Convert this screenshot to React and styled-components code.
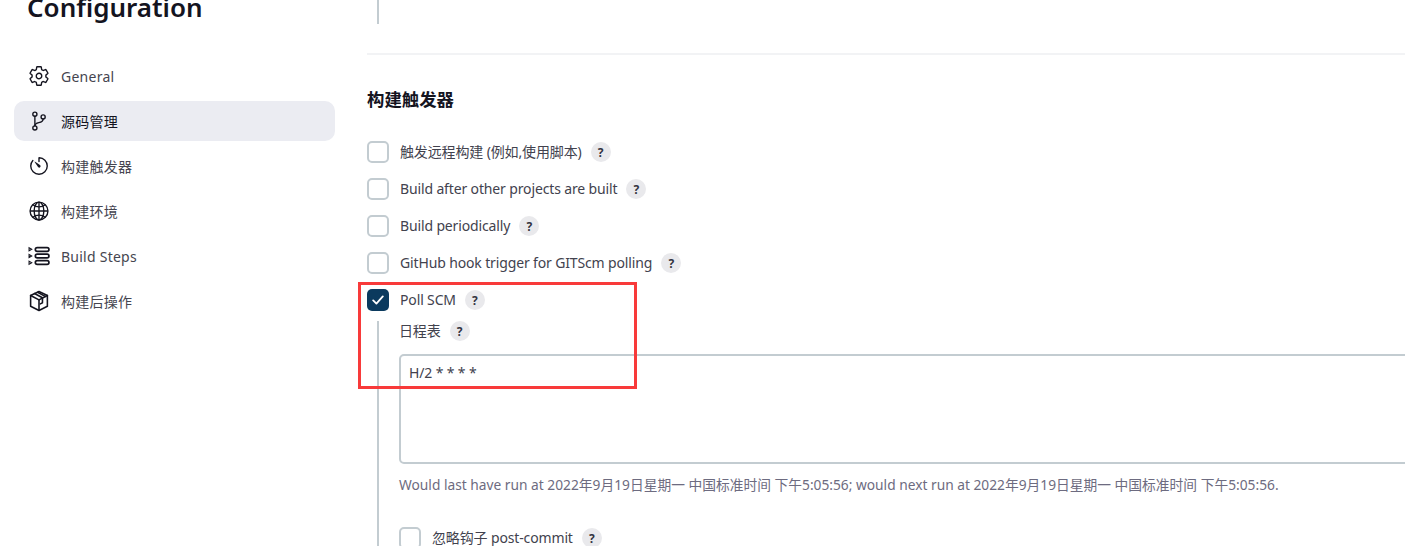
import React from "react";
import styled, { createGlobalStyle } from "styled-components";
import { IoSettingsOutline, IoGitBranchOutline, IoTimerOutline, IoGlobeOutline } from "react-icons/io5";

const GlobalStyle = createGlobalStyle`
  html, body { margin: 0; padding: 0; background: #fff; height: 546px; overflow: hidden; }
  body { font-family: "Noto Sans", "Noto Sans CJK SC", sans-serif; color: #14141f; }
  * { box-sizing: border-box; }
`;

const Page = styled.div`
  display: flex;
  position: relative;
  width: 1405px;
  height: 546px;
  overflow: hidden;
`;

const Sidebar = styled.aside`
  width: 367px;
  flex-shrink: 0;
  padding: 0 32px 0 14px;
`;

const Title = styled.h1`
  margin: -11px 0 31px 13px;
  height: 36px;
  font-size: 26px;
  line-height: 36px;
  font-weight: 600;
  color: #14141f;
`;

const NavList = styled.nav`
  display: flex;
  flex-direction: column;
  gap: 5px;
`;

const NavItem = styled.div`
  display: flex;
  align-items: center;
  gap: 11px;
  height: 40px;
  padding-left: 14px;
  border-radius: 10px;
  font-size: 14px;
  letter-spacing: 0.25px;
  color: ${(p) => (p.$active ? "#14141f" : "#45454f")};
  background: ${(p) => (p.$active ? "#ebecf2" : "transparent")};
  svg { width: 22px; height: 22px; flex-shrink: 0; color: #14141f; }
`;

const Main = styled.main`
  flex: 1;
  min-width: 0;
`;

const TopRule = styled.div`
  width: 2px;
  height: 24px;
  margin-left: 10px;
  background: #c3ccd1;
`;

const Divider = styled.hr`
  margin: 29px 0 0;
  border: 0;
  height: 2px;
  background: #f2f3f5;
`;

const SectionTitle = styled.h2`
  margin: 32px 0 30px;
  font-size: 17.4px;
  line-height: 24px;
  font-weight: 600;
  color: #14141f;
`;

const Rows = styled.div`
  display: flex;
  flex-direction: column;
  gap: 15px;
`;

const Row = styled.div`
  display: flex;
  align-items: center;
  height: 22px;
`;

const Box = styled.span`
  display: flex;
  align-items: center;
  justify-content: center;
  width: 22px;
  height: 22px;
  flex-shrink: 0;
  border-radius: 5px;
  border: ${(p) => (p.$checked ? "0" : "2px solid #c3ccd1")};
  background: ${(p) => (p.$checked ? "#0b3a5e" : "#fff")};
  margin-right: 11px;
`;

const Label = styled.span`
  font-size: 14px;
  line-height: 22px;
  letter-spacing: -0.14px;
  color: #42424e;
`;

const Help = styled.span`
  display: inline-flex;
  align-items: center;
  justify-content: center;
  width: 20px;
  height: 20px;
  margin-left: 9px;
  border-radius: 50%;
  background: #e9e9ec;
  font-size: 12px;
  font-weight: 700;
  color: #33333f;
`;

const Nested = styled.div`
  margin: 11px 0 0 10px;
  padding-left: 20px;
  border-left: 2px solid #c3ccd1;
  height: 240px;
`;

const FieldLabel = styled.div`
  display: flex;
  align-items: center;
  height: 20px;
  margin: -1px 0 13px;
`;

const Schedule = styled.textarea`
  display: block;
  width: 1100px;
  height: 110px;
  padding: 6px 8px;
  margin: 0;
  border: 2px solid #c3ccd1;
  border-radius: 5px;
  resize: none;
  outline: none;
  font-family: inherit;
  font-size: 14px;
  line-height: 21px;
  letter-spacing: -0.14px;
  color: #42424e;
`;

const Hint = styled.div`
  margin-top: 11px;
  font-size: 13.76px;
  line-height: 20px;
  color: #6d6b80;
  white-space: nowrap;
`;

const SubRow = styled(Row)`
  margin-top: 32px;
`;

const Highlight = styled.div`
  position: absolute;
  left: 358px;
  top: 282px;
  width: 279px;
  height: 107px;
  border: 3px solid #f83a3a;
  pointer-events: none;
`;

const StepsIcon = () => (
  <svg viewBox="0 0 21 21" fill="none" stroke="currentColor">
    <g strokeWidth="1">
      <path d="M1 2.5l2.6 1.5L1 5.5z" />
      <path d="M1 9l2.6 1.5L1 12z" />
      <path d="M1 15.5l2.6 1.5L1 18.5z" />
    </g>
    <g strokeWidth="1.6">
      <rect x="7" y="2.5" width="13" height="3.6" rx="1.8" />
      <rect x="7" y="8.7" width="13" height="3.6" rx="1.8" />
      <rect x="7" y="14.9" width="13" height="3.6" rx="1.8" />
    </g>
  </svg>
);

const PackageIcon = () => (
  <svg viewBox="0 0 21 21" fill="none" stroke="currentColor" strokeWidth="1.5" strokeLinejoin="round" strokeLinecap="round">
    <path d="M10.5 1.5l8 3.7v10.3l-8 4-8-4V5.2z" />
    <path d="M2.5 5.2l8 4.2 8-4.2" />
    <path d="M10.5 9.4v10" />
    <path d="M6.2 3.4l7.6 4v4.8l-2 1" />
    <path d="M9.2 2.2l7.2 3.9" />
  </svg>
);

const Check = () => (
  <svg width="12" height="10" viewBox="0 0 12 10" fill="none" stroke="#fff" strokeWidth="1.8" strokeLinecap="round" strokeLinejoin="round">
    <path d="M1.2 5.4L4.4 8.6 10.8 1.4" />
  </svg>
);

const navItems = [
  { label: "General", icon: <IoSettingsOutline /> },
  { label: "源码管理", icon: <IoGitBranchOutline />, active: true },
  { label: "构建触发器", icon: <IoTimerOutline /> },
  { label: "构建环境", icon: <IoGlobeOutline /> },
  { label: "Build Steps", icon: <StepsIcon /> },
  { label: "构建后操作", icon: <PackageIcon /> },
];

const triggers = [
  "触发远程构建 (例如,使用脚本)",
  "Build after other projects are built",
  "Build periodically",
  "GitHub hook trigger for GITScm polling",
];

export default function App() {
  return (
    <Page>
      <GlobalStyle />
      <Sidebar>
        <Title>Configuration</Title>
        <NavList>
          {navItems.map((item) => (
            <NavItem key={item.label} $active={item.active}>
              {item.icon}
              {item.label}
            </NavItem>
          ))}
        </NavList>
      </Sidebar>
      <Main>
        <TopRule />
        <Divider />
        <SectionTitle>构建触发器</SectionTitle>
        <Rows>
          {triggers.map((text) => (
            <Row key={text}>
              <Box />
              <Label>{text}</Label>
              <Help>?</Help>
            </Row>
          ))}
          <Row>
            <Box $checked>
              <Check />
            </Box>
            <Label>Poll SCM</Label>
            <Help>?</Help>
          </Row>
        </Rows>
        <Nested>
          <FieldLabel>
            <Label>日程表</Label>
            <Help>?</Help>
          </FieldLabel>
          <Schedule readOnly value="H/2 * * * *" />
          <Hint>
            Would last have run at 2022年9月19日星期一 中国标准时间 下午5:05:56; would next run at 2022年9月19日星期一 中国标准时间 下午5:05:56.
          </Hint>
          <SubRow>
            <Box />
            <Label>忽略钩子 post-commit</Label>
            <Help>?</Help>
          </SubRow>
        </Nested>
      </Main>
      <Highlight />
    </Page>
  );
}
